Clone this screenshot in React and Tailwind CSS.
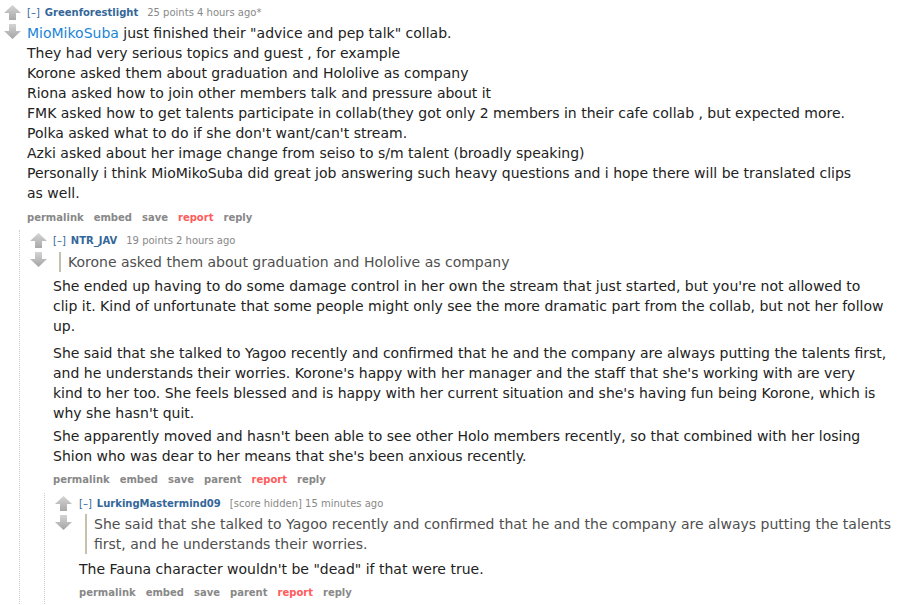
import React from "react";

const Arrows = () => (
  <div className="flex flex-col items-center w-[17px] shrink-0 pt-[3px]">
    <svg width="17" height="15" viewBox="0 0 17 15">
      <defs>
        <linearGradient id="ua" x1="0" y1="0" x2="0" y2="1">
          <stop offset="0" stopColor="#d4d4d4" />
          <stop offset="1" stopColor="#a9a9a9" />
        </linearGradient>
      </defs>
      <path d="M8.5 0 L17 8 L12 8 L12 15 L5 15 L5 8 L0 8 Z" fill="url(#ua)" />
    </svg>
    <svg width="17" height="15" viewBox="0 0 17 15" className="mt-[4px]">
      <defs>
        <linearGradient id="da" x1="0" y1="0" x2="0" y2="1">
          <stop offset="0" stopColor="#d4d4d4" />
          <stop offset="1" stopColor="#a3a3a3" />
        </linearGradient>
      </defs>
      <path d="M5 0 L12 0 L12 7 L17 7 L8.5 15 L0 7 L5 7 Z" fill="url(#da)" />
    </svg>
  </div>
);

const Tagline = ({ author, meta }) => (
  <div className="text-[10px] leading-[14px] text-[#888] whitespace-nowrap">
    <span className="text-[#369]">[–]</span>
    <span className="ml-[5px] font-bold text-[#369]">{author}</span>
    <span className="ml-[9px]">{meta}</span>
  </div>
);

const Buttons = ({ parent }) => (
  <div className="flex gap-[10px] text-[10px] leading-[14px] font-bold text-[#888] whitespace-nowrap">
    <span>permalink</span>
    <span>embed</span>
    <span>save</span>
    {parent && <span>parent</span>}
    <span className="text-[#ff5b5b]">report</span>
    <span>reply</span>
  </div>
);

const Lines = ({ lines }) =>
  lines.map((l, i) => (
    <div key={i} className="whitespace-nowrap">
      {l}
    </div>
  ));

const Quote = ({ lines, className }) => (
  <div className={`border-l-2 border-[#c5c1ad] pl-[7px] text-[#4f4f4f] ml-[6px] ${className}`}>
    <Lines lines={lines} />
  </div>
);

export default function App() {
  return (
    <div
      className="bg-white w-[912px] h-[605px] overflow-hidden text-[#222] text-[14px] leading-[20px]"
      style={{ fontFamily: '"DejaVu Sans", Verdana, sans-serif' }}
    >
      {/* top comment */}
      <div className="flex pl-[4px] pt-[2px]">
        <Arrows />
        <div className="ml-[6px] pt-[4px]">
          <Tagline author="Greenforestlight" meta="25 points 4 hours ago*" />
          <div className="mt-[3px]">
            <Lines
              lines={[
                <>
                  <span className="text-[#1a85d6]">MioMikoSuba</span> just finished their "advice and pep talk" collab.
                </>,
                "They had very serious topics and guest , for example",
                "Korone asked them about graduation and Hololive as company",
                "Riona asked how to join other members talk and pressure about it",
                "FMK asked how to get talents participate in collab(they got only 2 members in their cafe collab , but expected more.",
                "Polka asked what to do if she don't want/can't stream.",
                "Azki asked about her image change from seiso to s/m talent (broadly speaking)",
                "Personally i think MioMikoSuba did great job answering such heavy questions and i hope there will be translated clips",
                "as well.",
              ]}
            />
          </div>
          <div className="mt-[8px]">
            <Buttons />
          </div>
        </div>
      </div>

      {/* child comment */}
      <div className="ml-[19px] mt-[5px] border-l border-dotted border-[#ccc] flex pl-[10px]">
        <Arrows />
        <div className="ml-[6px] pt-[4px]">
          <Tagline author="NTR_JAV" meta="19 points 2 hours ago" />
          <Quote className="mt-[4px] mb-[4px]" lines={["Korone asked them about graduation and Hololive as company"]} />
          <div className="mt-[4px]">
            <Lines
              lines={[
                "She ended up having to do some damage control in her own the stream that just started, but you're not allowed to",
                "clip it. Kind of unfortunate that some people might only see the more dramatic part from the collab, but not her follow",
                "up.",
              ]}
            />
          </div>
          <div className="mt-[7px]">
            <Lines
              lines={[
                "She said that she talked to Yagoo recently and confirmed that he and the company are always putting the talents first,",
                "and he understands their worries. Korone's happy with her manager and the staff that she's working with are very",
                "kind to her too. She feels blessed and is happy with her current situation and she's having fun being Korone, which is",
                "why she hasn't quit.",
              ]}
            />
          </div>
          <div className="mt-[3px]">
            <Lines
              lines={[
                "She apparently moved and hasn't been able to see other Holo members recently, so that combined with her losing",
                "Shion who was dear to her means that she's been anxious recently.",
              ]}
            />
          </div>
          <div className="mt-[7px]">
            <Buttons parent />
          </div>

          {/* grandchild */}
          <div className="-ml-[9px] mt-[6px] border-l border-dotted border-[#ccc] flex pl-[10px] pb-[10px]">
            <Arrows />
            <div className="ml-[7px] pt-[4px]">
              <Tagline author="LurkingMastermind09" meta="[score hidden] 15 minutes ago" />
              <Quote
                className="mt-[3px] mb-[5px]"
                lines={[
                  "She said that she talked to Yagoo recently and confirmed that he and the company are always putting the talents",
                  "first, and he understands their worries.",
                ]}
              />
              <div className="mt-[5px]">The Fauna character wouldn't be "dead" if that were true.</div>
              <div className="mt-[7px]">
                <Buttons parent />
              </div>
            </div>
          </div>
        </div>
      </div>
    </div>
  );
}
